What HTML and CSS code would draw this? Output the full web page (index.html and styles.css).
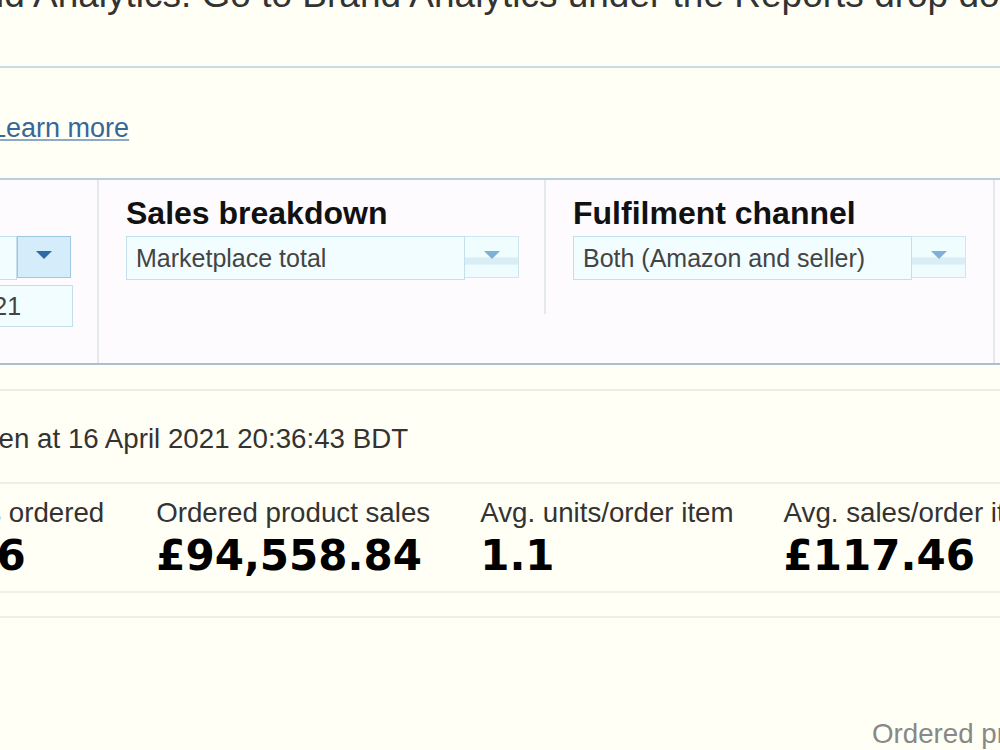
FILE: index.html
```html
<!DOCTYPE html>
<html lang="en">
<head>
    <meta charset="UTF-8">
    <title>Business Reports - Sales Dashboard</title>
    <link rel="stylesheet" href="styles.css">
</head>
<body>
    <div class="page">
        <p class="notice">Brand Analytics. Go to Brand Analytics under the Reports drop down menu.</p>
        <div class="rule"></div>
        <p class="learn"><a href="#">Learn more</a></p>

        <div class="filters">
            <div class="filter filter_date">
                <h3>Date</h3>
                <div class="select select_active">
                    <span class="select_text">Custom</span>
                    <span class="select_btn"><i class="arrow"></i></span>
                </div>
                <div class="dates">
                    <span class="date_input">01/04/2021</span>
                    <span class="date_input">16/04/2021</span>
                </div>
            </div>
            <div class="filter">
                <h3>Sales breakdown</h3>
                <div class="select">
                    <span class="select_text">Marketplace total</span>
                    <span class="select_btn"><i class="arrow"></i></span>
                </div>
            </div>
            <div class="filter filter_last">
                <h3>Fulfilment channel</h3>
                <div class="select">
                    <span class="select_text">Both (Amazon and seller)</span>
                    <span class="select_btn"><i class="arrow"></i></span>
                </div>
            </div>
            <div class="filter_apply"></div>
        </div>

        <div class="rule rule_light"></div>
        <p class="snapshot">Snapshot taken at 16 April 2021 20:36:43 BDT</p>

        <div class="metrics">
            <div class="metric metric_first">
                <div class="metric_label">Units ordered</div>
                <div class="metric_value">886</div>
            </div>
            <div class="metric">
                <div class="metric_label">Ordered product sales</div>
                <div class="metric_value">£94,558.84</div>
            </div>
            <div class="metric">
                <div class="metric_label">Avg. units/order item</div>
                <div class="metric_value">1.1</div>
            </div>
            <div class="metric">
                <div class="metric_label">Avg. sales/order item</div>
                <div class="metric_value">£117.46</div>
            </div>
            <div class="metric">
                <div class="metric_label">Total order items</div>
                <div class="metric_value">805</div>
            </div>
        </div>

        <div class="chart">
            <span class="legend">Ordered product sales</span>
        </div>
    </div>
</body>
</html>
```

FILE: styles.css
```css
html, body{margin: 0; padding: 0; overflow: hidden; height: 750px;}
body{background-color: #fffff5; color: #333; font-family: "Liberation Sans", Arial, sans-serif; font-size: 27.7px;}
.page{width: 1000px;}
p{margin: 0;}

/* top message, cut by the window on both sides */
.notice{font-size: 37px; line-height: 40px; margin-top: -25px; margin-left: -74px; white-space: nowrap;}
.rule{height: 0; border-top: 2px solid #c6dde6; margin-top: 51px; margin-left: -400px; width: 1800px;}
.rule_light{border-top-color: #eceee3; margin-top: 24px;}
.learn{line-height: 32px; margin-top: 44px; margin-left: -9px; font-size: 27px;}
.learn a{color: #36679a; text-decoration-color: #8fa9c4;}

/* filter panel */
.filters{display: flex; align-items: flex-start; margin-left: -347px; margin-top: 34px; width: 1700px;
 background-color: #fdfbfe; border-top: 2px solid #b9cfdc; border-bottom: 2px solid #a9bfcd;}
.filter{flex: none; box-sizing: border-box; width: 447px; padding: 15px 0 34px 27px; border-right: 2px solid #e4e9ee;}
.filter_date{width: 446px; padding-left: 25px; padding-bottom: 36px;}
.filter_last{border-right: none;}
.filter_apply{flex: none; align-self: stretch; width: 300px; border-left: 2px solid #e4e9ee;}
.filter h3{margin: 0 0 5px; font-size: 32px; line-height: 36px; color: #111;}

.select{display: flex; align-items: flex-start; width: 393px;}
.select_text{box-sizing: border-box; width: 339px; height: 44px; line-height: 42px; padding-left: 9px;
 font-size: 25px; color: #444; background-color: #f2fdff; border: 1px solid #c3dfe9;}
.select_btn{box-sizing: border-box; width: 54px; height: 42px; display: flex; align-items: center; justify-content: center;
 border: 1px solid #cfe6ee; border-left: none;
 background: linear-gradient(#f0fdff 0%, #f0fdff 50%, #d9eef4 52%, #d9eef4 68%, #eefcff 70%);}
.arrow{width: 0; height: 0; border-left: 8px solid transparent; border-right: 8px solid transparent; border-top: 8px solid #7eb0d8; margin-top: -4px;}
.select_active .select_btn{background: #d5ecfa; border: 1px solid #9fc8e4;}
.select_active .arrow{border-top-color: #2f69a6;}

.dates{display: flex; gap: 21px; margin-top: 5px;}
.date_input{box-sizing: border-box; width: 187px; height: 42px; line-height: 40px; padding-left: 9px;
 font-size: 25px; color: #444; background-color: #f2fdff; border: 1px solid #c3dfe9;}

.snapshot{line-height: 32px; margin-top: 32px; margin-left: -163px; white-space: nowrap;}

/* metrics */
.metrics{display: flex; gap: 50px; margin-top: 27px; margin-left: -62px; width: 1700px; padding: 13px 0 11px;
 border-top: 2px solid #eeefe6; border-bottom: 2px solid #eeefe6;}
.metric{flex: none;}
.metric_first{margin-right: 2px;}
.metric_label{line-height: 32px; color: #333;}
.metric_value{margin-top: 3px; font-family: "DejaVu Sans", Verdana, sans-serif; font-weight: bold; font-size: 42px; line-height: 48px; color: #000;}

.chart{margin-top: 23px; margin-left: -62px; width: 1700px; border-top: 2px solid #eeefe6; padding-top: 100px;}
.legend{margin-left: 934px; color: #888; white-space: nowrap;}
```
